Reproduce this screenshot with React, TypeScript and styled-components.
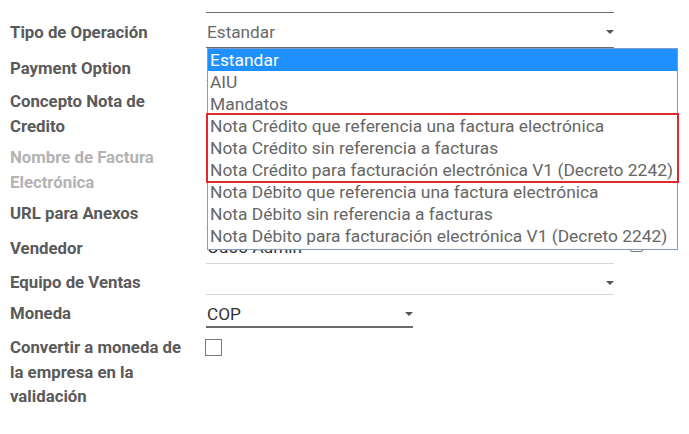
import React from "react";
import styled, { createGlobalStyle } from "styled-components";

const GlobalStyle = createGlobalStyle`
  html, body { margin: 0; padding: 0; background: #ffffff; }
  body { font-family: Roboto, "Noto Sans", "Liberation Sans", sans-serif; }
`;

const Page = styled.div`
  position: relative;
  width: 689px;
  height: 434px;
  overflow: hidden;
  padding-left: 10px;
  box-sizing: border-box;
`;

const Form = styled.div`
  display: grid;
  grid-template-columns: 196px auto;
`;

const Label = styled.div<{ $muted?: boolean; $h: number; $pt: number }>`
  height: ${(p) => p.$h}px;
  box-sizing: border-box;
  padding-top: ${(p) => p.$pt}px;
  font-size: 16.8px;
  font-weight: 700;
  line-height: 24.5px;
  color: ${(p) => (p.$muted ? "#b3b3b3" : "#5a5a5a")};
  white-space: nowrap;
`;

const FieldCell = styled.div`
  display: flex;
  align-items: flex-start;
`;

const Input = styled.div<{ $w: number; $line: "dark" | "light" | "thick" | "none"; $h: number }>`
  position: relative;
  width: ${(p) => p.$w}px;
  height: ${(p) => p.$h}px;
  box-sizing: border-box;
  padding-top: 7px;
  font-size: 17.2px;
  line-height: 24px;
  color: #666666;
  display: flex;
  align-items: flex-start;
  justify-content: space-between;
  border-bottom: ${(p) =>
    p.$line === "dark"
      ? "1px solid #6b6b6b"
      : p.$line === "light"
      ? "1px solid #d6d6d6"
      : p.$line === "thick"
      ? "2px solid #6b6b6b"
      : "none"};
`;

const Value = styled.span<{ $dark?: boolean }>`
  padding-left: 1px;
  color: ${(p) => (p.$dark ? "#333333" : "#6a6a6a")};
  white-space: nowrap;
`;

const Caret = styled.span`
  width: 0;
  height: 0;
  margin-top: 10px;
  border-left: 4px solid transparent;
  border-right: 4px solid transparent;
  border-top: 4px solid #555555;
`;

const ExtButton = styled.span`
  width: 11px;
  height: 13px;
  margin-left: 16px;
  margin-top: 9px;
  border: 1px solid #777777;
  border-radius: 2px;
`;

const Checkbox = styled.span`
  display: block;
  width: 17px;
  height: 17px;
  margin-top: 11px;
  margin-left: -1px;
  box-sizing: border-box;
  border: 1px solid #7a7a7a;
  background: #ffffff;
`;

const Dropdown = styled.div`
  position: absolute;
  left: 207px;
  top: 48px;
  width: 471px;
  box-sizing: border-box;
  border: 1px solid #7f9cc9;
  background: #ffffff;
  padding-bottom: 2px;
  font-size: 17.4px;
  line-height: 22px;
`;

const Option = styled.div<{ $selected?: boolean }>`
  height: 22px;
  padding-left: 2px;
  white-space: nowrap;
  color: ${(p) => (p.$selected ? "#ffffff" : "#666666")};
  background: ${(p) => (p.$selected ? "#1e90ff" : "transparent")};
`;

const Highlight = styled.div`
  outline: 2px solid #e3262f;
  outline-offset: 0px;
`;

type RowDef = {
  label: string[];
  h: number;
  pt?: number;
  muted?: boolean;
  field: React.ReactNode;
};

export default function App() {
  const rows: RowDef[] = [
    { label: [], h: 13, field: <Input $w={408} $h={13} $line="dark" /> },
    {
      label: ["Tipo de Operación"],
      h: 35,
      pt: 7,
      field: (
        <Input $w={408} $h={35} $line="dark">
          <Value>Estandar</Value>
          <Caret />
        </Input>
      ),
    },
    { label: ["Payment Option"], h: 33, pt: 8, field: <Input $w={408} $h={33} $line="light" /> },
    {
      label: ["Concepto Nota de", "Credito"],
      h: 56,
      pt: 8,
      field: <Input $w={408} $h={35} $line="light" />,
    },
    {
      label: ["Nombre de Factura", "Electrónica"],
      h: 56,
      pt: 8,
      muted: true,
      field: <Input $w={408} $h={35} $line="none" />,
    },
    { label: ["URL para Anexos"], h: 35, pt: 8, field: <Input $w={408} $h={35} $line="light" /> },
    {
      label: ["Vendedor"],
      h: 36,
      pt: 8,
      field: (
        <FieldCell>
          <Input $w={408} $h={36} $line="light">
            <Value $dark>Odoo Admin</Value>
          </Input>
          <ExtButton />
        </FieldCell>
      ),
    },
    {
      label: ["Equipo de Ventas"],
      h: 31,
      pt: 6,
      field: (
        <Input $w={408} $h={31} $line="light">
          <Value />
          <Caret />
        </Input>
      ),
    },
    {
      label: ["Moneda"],
      h: 33,
      pt: 6,
      field: (
        <Input $w={207} $h={33} $line="thick">
          <Value $dark>COP</Value>
          <Caret />
        </Input>
      ),
    },
    {
      label: ["Convertir a moneda de", "la empresa en la", "validación"],
      h: 80,
      pt: 7,
      field: <Checkbox />,
    },
  ];

  return (
    <>
      <GlobalStyle />
      <Page>
        <Form>
          {rows.map((r, i) => (
            <React.Fragment key={i}>
              <Label $h={r.h} $pt={r.pt ?? 0} $muted={r.muted}>
                {r.label.map((l, j) => (
                  <div key={j}>{l}</div>
                ))}
              </Label>
              <div>{r.field}</div>
            </React.Fragment>
          ))}
        </Form>
        <Dropdown>
          <Option $selected>Estandar</Option>
          <Option>AIU</Option>
          <Option>Mandatos</Option>
          <Highlight>
            <Option>Nota Crédito que referencia una factura electrónica</Option>
            <Option>Nota Crédito sin referencia a facturas</Option>
            <Option>Nota Crédito para facturación electrónica V1 (Decreto 2242)</Option>
          </Highlight>
          <Option>Nota Débito que referencia una factura electrónica</Option>
          <Option>Nota Débito sin referencia a facturas</Option>
          <Option>Nota Débito para facturación electrónica V1 (Decreto 2242)</Option>
        </Dropdown>
      </Page>
    </>
  );
}
